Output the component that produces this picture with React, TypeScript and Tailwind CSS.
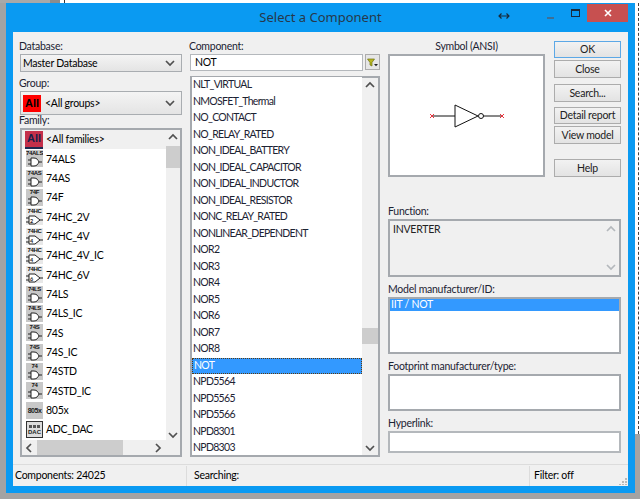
const families = [
  { name: "74ALS", tag: "74ALS", kind: "gate" },
  { name: "74AS", tag: "74AS", kind: "gate" },
  { name: "74F", tag: "74F", kind: "gate" },
  { name: "74HC_2V", tag: "74HC", kind: "hc", mark: "2V" },
  { name: "74HC_4V", tag: "74HC", kind: "hc", mark: "4V" },
  { name: "74HC_4V_IC", tag: "74HC", kind: "hc", mark: "4V" },
  { name: "74HC_6V", tag: "74HC", kind: "hc", mark: "6V" },
  { name: "74LS", tag: "74LS", kind: "gate" },
  { name: "74LS_IC", tag: "74LS", kind: "gate" },
  { name: "74S", tag: "74S", kind: "gate" },
  { name: "74S_IC", tag: "74S", kind: "gate" },
  { name: "74STD", tag: "74", kind: "gate" },
  { name: "74STD_IC", tag: "74", kind: "gate" },
  { name: "805x", tag: "805x", kind: "chip" },
  { name: "ADC_DAC", tag: "DAC", kind: "adc" },
]

const components = [
  "NLT_VIRTUAL", "NMOSFET_Thermal", "NO_CONTACT", "NO_RELAY_RATED", "NON_IDEAL_BATTERY",
  "NON_IDEAL_CAPACITOR", "NON_IDEAL_INDUCTOR", "NON_IDEAL_RESISTOR", "NONC_RELAY_RATED",
  "NONLINEAR_DEPENDENT", "NOR2", "NOR3", "NOR4", "NOR5", "NOR6", "NOR7", "NOR8", "NOT",
  "NPD5564", "NPD5565", "NPD5566", "NPD8301", "NPD8303",
]

function Chevron({ dir, light }: { dir: "up" | "down" | "left" | "right"; light?: boolean }) {
  const pts = {
    up: "1,7 5,3 9,7",
    down: "1,3 5,7 9,3",
    left: "7,1 3,5 7,9",
    right: "3,1 7,5 3,9",
  }
  return (
    <svg width="10" height="10" viewBox="0 0 10 10" className="shrink-0">
      <polyline points={pts[dir]} fill="none" stroke={light ? "#b4b8bc" : "#505050"} strokeWidth="1.7" />
    </svg>
  )
}

function Label({ text, cls }: { text: string; cls: string }) {
  return <div className={`flex items-end pb-[3px] leading-none text-[#1c2333] ${cls}`}>{text}</div>
}

function Select({ h, children }: { h: string; children: React.ReactNode }) {
  return (
    <div className={`flex items-center justify-between border border-[#a9adb1] bg-gradient-to-b from-[#f4f4f4] to-[#e4e4e4] pr-[6px] ${h}`}>
      {children}
      <Chevron dir="down" />
    </div>
  )
}

function FamilyIcon({ tag, kind, mark }: { tag: string; kind: string; mark?: string }) {
  if (kind === "chip") {
    return (
      <div className="flex h-[17px] w-[17px] items-center justify-center bg-[#c8c8c8] font-['Liberation_Sans',sans-serif] text-[7px] font-bold leading-none tracking-[-0.5px] text-[#222]">
        {tag}
      </div>
    )
  }
  if (kind === "adc") {
    return (
      <div className="flex h-[17px] w-[17px] flex-col items-center justify-center gap-[1px] border border-[#333] bg-[#ddd]">
        <div className="flex gap-[1px]">
          <div className="h-[3px] w-[3px] bg-[#555]" />
          <div className="h-[3px] w-[3px] bg-[#555]" />
          <div className="h-[3px] w-[3px] bg-[#555]" />
        </div>
        <div className="font-['Liberation_Sans',sans-serif] text-[6px] font-bold leading-none tracking-normal text-[#222]">{tag}</div>
      </div>
    )
  }
  return (
    <div className={`flex h-[17px] w-[17px] flex-col items-center overflow-hidden ${kind === "hc" ? "bg-[#e8e8e8]" : "bg-[#c8c8c8]"}`}>
      <div className="font-['Liberation_Sans',sans-serif] text-[6px] font-bold leading-[7px] tracking-[-0.3px] text-[#111]">{tag}</div>
      {kind === "hc" ? (
        <svg width="17" height="10" viewBox="0 0 17 10">
          <path d="M3 1h6l5 4-5 4H3z" fill="#fff" stroke="#222" />
          <path d="M0 3h3M0 7h3M14 5h3" stroke="#222" />
          <text x="4" y="7.5" fontSize="5.5" fontWeight="700" fill="#222">{mark?.charAt(0)}</text>
        </svg>
      ) : (
        <svg width="17" height="10" viewBox="0 0 17 10">
          <path d="M5 1h3c3 0 4 2 5 4-1 2-2 4-5 4H5z" fill="#fff" stroke="#222" />
          <path d="M2 3h3M2 7h3M13 5h3" stroke="#222" />
        </svg>
      )}
    </div>
  )
}

function Button({ text, cls, focus }: { text: string; cls: string; focus?: boolean }) {
  return (
    <div className={`flex w-[67px] items-center justify-center border bg-gradient-to-b from-[#f2f2f2] to-[#e3e3e3] pt-[1px] text-[#222] ${focus ? "border-[#5ca8e6]" : "border-[#acacac]"} ${cls}`}>
      {text}
    </div>
  )
}

function Inverter() {
  return (
    <svg width="76" height="30" viewBox="0 0 76 30">
      <path d="M3 15h23M26 4v22l23-11zM54 15h19" fill="none" stroke="#111" strokeWidth="1" />
      <circle cx="52" cy="15" r="2.5" fill="#fff" stroke="#111" />
      <path d="M1 13l4 4M5 13l-4 4M71 13l4 4M75 13l-4 4" stroke="#e8323c" strokeWidth="1" />
    </svg>
  )
}

export default function App() {
  return (
    <div className="flex h-[499px] w-[640px] flex-col overflow-hidden bg-[#a3a3a3] font-['Lato',sans-serif] text-[10.5px] tracking-[-0.25px]">
      <div className="flex h-[3px]">
        <div className="w-[50px] bg-[#a9a9a9]" />
        <div className="w-[10px] bg-[#8c8c8c]" />
        <div className="w-[4px] bg-white" />
        <div className="w-[1px] bg-[#333]" />
        <div className="flex-1 bg-white" />
      </div>

      <div className="flex h-[490px]">
        <div className="w-[6px]" />

        <div className="flex w-[629px] flex-col bg-[#0a9af2] px-[7px] pb-[7px]">
          <div className="relative flex h-[29px] shrink-0 items-center justify-center pb-[1px]">
            <span className="font-['Noto_Sans',sans-serif] text-[13px] leading-none tracking-normal text-[#26384a]">Select a Component</span>
            <svg width="12" height="8" viewBox="0 0 12 8" className="absolute left-[485px] top-[9px]">
              <path d="M1 4h10M3.5 1.5L1 4l2.5 2.5M8.5 1.5L11 4 8.5 6.5" fill="none" stroke="#1a2a3a" strokeWidth="1.2" />
            </svg>
            <div className="absolute left-[534px] top-[14px] h-[2px] w-[7px] bg-[#3d6f96]" />
            <div className="absolute left-[558px] top-[6px] h-[8px] w-[9px] border border-t-[2px] border-[#1a2a3a]" />
            <div className="absolute left-[574px] top-[1px] flex h-[18px] w-[41px] items-center justify-center bg-[#c75050]">
              <svg width="8" height="8" viewBox="0 0 8 8">
                <path d="M1 1l6 6M7 1L1 7" stroke="#fff" strokeWidth="1.6" />
              </svg>
            </div>
          </div>

          <div className="flex min-h-0 flex-1 flex-col bg-[#f0f0f0]">
            <div className="flex flex-1 gap-[8px] pl-[7px] pt-[7px]">
              <div className="flex w-[162px] flex-col">
                <Label text="Database:" cls="h-[15px] -ml-[1px]" />
                <Select h="h-[18px] pl-[2px]">
                  <span className="pt-[1px]">Master Database</span>
                </Select>
                <Label text="Group:" cls="mt-[3px] h-[16px] -ml-[1px]" />
                <Select h="h-[24px] pl-[2px]">
                  <div className="flex items-center gap-[4px]">
                    <div className="flex h-[17px] w-[18px] items-center justify-center bg-[#ff0000] font-['Liberation_Sans',sans-serif] text-[11px] font-bold tracking-normal text-black">All</div>
                    <span className="pt-[1px]">&lt;All groups&gt;</span>
                  </div>
                </Select>
                <Label text="Family:" cls="h-[13px] -ml-[1px]" />
                <div className="flex h-[329px] flex-col border-2 border-[#a5a9ae]">
                  <div className="flex min-h-0 flex-1">
                    <div className="w-[144px] bg-white">
                      <div className="flex h-[19.33px] items-center gap-[3px] bg-[#f0f0f0] pl-[3px]">
                        <div className="flex h-[18px] w-[18px] items-center justify-center border-b-2 border-[#1c2a50] bg-[#c4304a] font-['Liberation_Sans',sans-serif] text-[11px] font-bold tracking-normal text-[#14204a]">All</div>
                        <span className="pt-[1px]">&lt;All families&gt;</span>
                      </div>
                      {families.map((f) => (
                        <div key={f.name} className="flex h-[19.33px] items-center gap-[3px] pl-[4px]">
                          <FamilyIcon tag={f.tag} kind={f.kind} mark={f.mark} />
                          <span className="pt-[1px]">{f.name}</span>
                        </div>
                      ))}
                    </div>
                    <div className="flex flex-1 flex-col items-center pt-[2px]">
                      <Chevron dir="up" />
                      <div className="mt-[4px] h-[22px] w-full bg-[#cdcdcd]" />
                      <div className="flex-1" />
                      <Chevron dir="down" />
                    </div>
                  </div>
                  <div className="flex h-[15px] items-center pl-[2px]">
                    <Chevron dir="left" />
                    <div className="ml-[3px] h-full w-[86px] bg-[#cdcdcd]" />
                    <div className="flex-1" />
                    <div className="pr-[17px]">
                      <Chevron dir="right" />
                    </div>
                  </div>
                </div>
              </div>

              <div className="flex w-[190px] flex-col">
                <Label text="Component:" cls="h-[15px] -ml-[1px]" />
                <div className="flex h-[17px] gap-[2px]">
                  <div className="flex w-[173px] items-center border border-[#b4b8bc] bg-white pl-[4px] pt-[1px]">NOT</div>
                  <div className="flex h-[16px] w-[15px] items-center justify-center border border-[#acacac] bg-[#e6e6e6]">
                    <svg width="11" height="9" viewBox="0 0 11 9">
                      <path d="M0.5 1h7L5 4.5V8L3 7V4.5z" fill="#b8b820" stroke="#6f7010" strokeWidth="0.7" />
                      <path d="M7 6h4L9 8.2z" fill="#222" />
                    </svg>
                  </div>
                </div>
                <div className="mt-[5px] flex h-[381px] border-2 border-[#a5a9ae]">
                  <div className="-mt-[1px] w-[170px] bg-white tracking-[-0.7px]">
                    {components.map((c) => (
                      <div
                        key={c}
                        className={`flex h-[16.5px] items-center pl-[1px] ${c === "NOT" ? "border border-dotted border-[#5a3a10] bg-[#3399ff] text-white" : "text-[#1c2333]"}`}
                      >
                        {c}
                      </div>
                    ))}
                  </div>
                  <div className="flex flex-1 flex-col items-center pt-[2px]">
                    <Chevron dir="up" />
                    <div className="mt-[238px] h-[16px] w-full bg-[#cdcdcd]" />
                    <div className="flex-1" />
                    <div className="pb-[2px]">
                      <Chevron dir="down" />
                    </div>
                  </div>
                </div>
              </div>

              <div className="flex w-[233px] flex-col">
                <div className="flex gap-[9px]">
                  <div className="flex w-[157px] flex-col">
                    <Label text="Symbol (ANSI)" cls="h-[15px] justify-center" />
                    <div className="flex h-[123px] items-center justify-center border-2 border-[#a5a9ae] bg-white">
                      <Inverter />
                    </div>
                  </div>
                  <div className="mt-[2px] flex flex-col">
                    <Button text="OK" cls="h-[17px]" focus />
                    <Button text="Close" cls="mt-[2px] h-[18px]" />
                    <Button text="Search..." cls="mt-[6px] h-[18px]" />
                    <Button text="Detail report" cls="mt-[5px] h-[17px]" />
                    <Button text="View model" cls="mt-[2px] h-[18px]" />
                    <Button text="Help" cls="mt-[15px] h-[18px]" />
                  </div>
                </div>
                <Label text="Function:" cls="mt-[28px] h-[14px]" />
                <div className="flex h-[58px] justify-between border-2 border-[#a5a9ae] pl-[3px] pr-[3px] pt-[1px]">
                  <span className="leading-[15px] text-[#222]">INVERTER</span>
                  <div className="flex flex-col justify-between pb-[3px] pt-[2px]">
                    <Chevron dir="up" light />
                    <Chevron dir="down" light />
                  </div>
                </div>
                <Label text="Model manufacturer/ID:" cls="mt-[5px] h-[15px]" />
                <div className="h-[57px] border-2 border-[#a5a9ae] bg-white">
                  <div className="flex h-[12px] items-center bg-[#3399ff] pl-[1px] text-white">IIT / NOT</div>
                </div>
                <Label text="Footprint manufacturer/type:" cls="mt-[5px] h-[15px]" />
                <div className="h-[37px] border-2 border-[#a5a9ae] bg-white" />
                <Label text="Hyperlink:" cls="mt-[5px] h-[15px]" />
                <div className="h-[22px] border-2 border-[#b4b8bc] bg-white" />
              </div>
            </div>

            <div className="relative flex h-[22px] shrink-0 items-center border-t border-[#dcdcdc] pt-[1px]">
              <div className="flex h-full w-[174px] items-center border-r border-[#dcdcdc] pl-[2px]">Components: 24025</div>
              <div className="flex h-full w-[343px] items-center border-r border-[#dcdcdc] pl-[7px]">Searching:</div>
              <div className="pl-[4px]">Filter: off</div>
              <svg width="8" height="8" viewBox="0 0 8 8" className="absolute bottom-[1px] right-[1px]">
                <path d="M6 1h2v2H6zM3 4h2v2H3zM6 4h2v2H6zM0 7h2v1H0zM3 7h2v1H3zM6 7h2v1H6z" fill="#b8b8b8" />
              </svg>
            </div>
          </div>
        </div>

        <div className="flex w-[5px] flex-col">
          <div className="flex h-[431px] justify-end bg-white pr-[1px]">
            <div className="h-full border-r border-dashed border-[#444]" />
          </div>
        </div>
      </div>
    </div>
  )
}
